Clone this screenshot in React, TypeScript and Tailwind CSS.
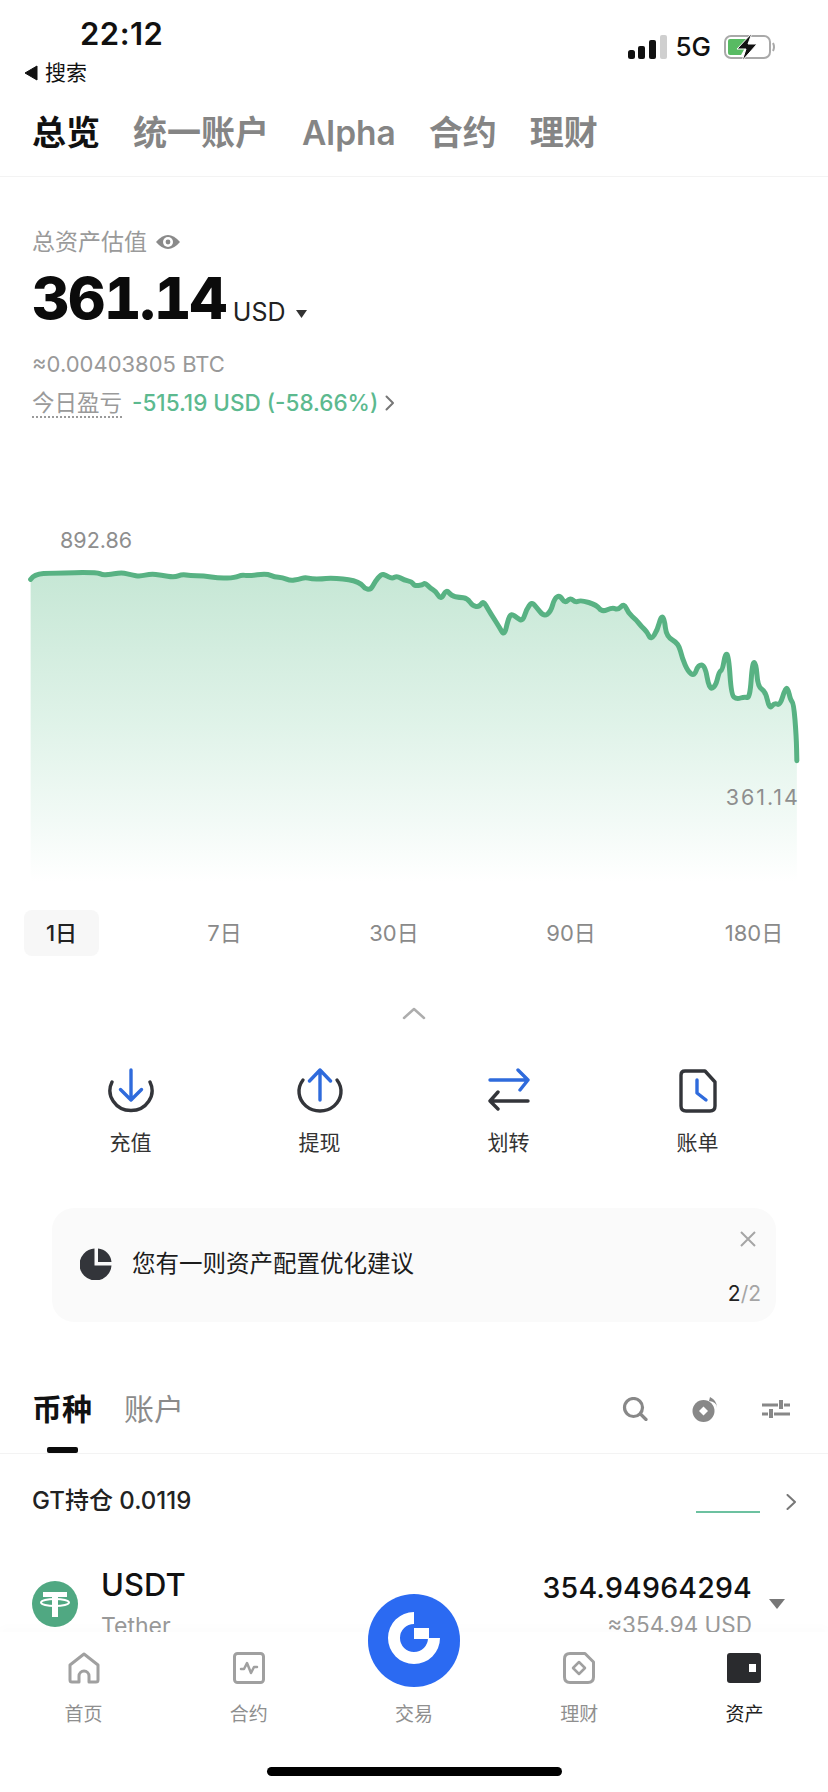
import React from "react";

const pts: [number, number][] = [[58,208],[65,192],[100,189],[183,187],[195,195],[205,193],[215,192],[232,188],[250,195],[265,199],[285,192],[305,195],[330,202],[345,193],[360,197],[385,197],[415,205],[445,203],[458,194],[470,198],[505,191],[520,201],[535,203],[550,212],[565,208],[578,202],[590,207],[610,207],[625,204],[650,207],[670,212],[685,222],[690,235],[702,240],[710,215],[722,192],[730,195],[742,206],[752,198],[765,210],[780,215],[785,228],[800,225],[805,218],[815,235],[825,243],[835,270],[845,238],[855,258],[870,262],[885,265],[895,288],[908,291],[915,272],[925,300],[935,325],[945,350],[955,378],[962,330],[968,310],[980,325],[990,333],[997,298],[1007,276],[1015,290],[1030,320],[1043,305],[1050,265],[1060,256],[1070,280],[1080,263],[1090,278],[1100,270],[1130,285],[1140,306],[1160,292],[1170,300],[1182,280],[1190,310],[1205,330],[1215,350],[1225,365],[1233,390],[1245,360],[1252,318],[1258,325],[1262,380],[1285,400],[1292,445],[1303,485],[1315,498],[1322,465],[1335,465],[1343,538],[1355,530],[1362,485],[1368,480],[1374,428],[1380,440],[1385,555],[1395,568],[1410,560],[1420,565],[1425,455],[1432,460],[1435,530],[1450,545],[1457,598],[1467,578],[1477,587],[1487,535],[1492,535],[1497,570],[1503,580],[1508,680],[1509,752]];
let line = `M${pts[0][0]} ${pts[0][1]}`;
for (let i = 1; i < pts.length - 1; i++) {
  const mx = (pts[i][0] + pts[i + 1][0]) / 2;
  const my = (pts[i][1] + pts[i + 1][1]) / 2;
  line += `Q${pts[i][0]} ${pts[i][1]} ${mx} ${my}`;
}
line += `L${pts[pts.length - 1][0]} ${pts[pts.length - 1][1]}`;
const area = line + "L1509 1115L58 1115Z";

function Chart() {
  return (
    <div className="relative h-[400px]">
      <svg viewBox="0 0 1568 1200" preserveAspectRatio="none" className="block w-[828px] h-[400px]">
        <defs>
          <linearGradient id="fillG" gradientUnits="userSpaceOnUse" x1="0" y1="187" x2="0" y2="1115">
            <stop offset="0" stopColor="#c6e7d5" />
            <stop offset="0.5" stopColor="#e0f3e9" />
            <stop offset="0.8" stopColor="#f2faf6" />
            <stop offset="1" stopColor="#ffffff" />
          </linearGradient>
        </defs>
        <path d={area} fill="url(#fillG)" />
        <path d={line} fill="none" stroke="#58b283" strokeWidth="5" vectorEffect="non-scaling-stroke" strokeLinejoin="round" strokeLinecap="round" />
      </svg>
      <span className="absolute left-[60px] top-[17px] text-[21.5px] leading-[26px] text-[#8e8e8e]">892.86</span>
      <span className="absolute right-[28px] top-[274px] text-[21.5px] leading-[26px] tracking-[2px] text-[#8e8e8e]">361.14</span>
    </div>
  );
}

function Deposit() {
  return (
    <svg width="48" height="46" viewBox="0 0 48 46" fill="none" strokeLinecap="round" strokeLinejoin="round" strokeWidth="3.4">
      <path d="M5 14A21 20 0 1 0 43 14" stroke="#33353a" />
      <path d="M24 2V32M13.5 21.5L24 32L34.5 21.5" stroke="#2f6bdc" />
    </svg>
  );
}
function Withdraw() {
  return (
    <svg width="48" height="46" viewBox="0 0 48 46" fill="none" strokeLinecap="round" strokeLinejoin="round" strokeWidth="3.4">
      <path d="M7 12A21 19.500 0 1 0 41 12" stroke="#33353a" />
      <path d="M24 32V2M13.5 13L24 2L34.5 13" stroke="#2f6bdc" />
    </svg>
  );
}
function Transfer() {
  return (
    <svg width="48" height="46" viewBox="0 0 48 46" fill="none" strokeLinecap="round" strokeLinejoin="round" strokeWidth="3.4">
      <path d="M5 12H43M33 2L43 12L35 22" stroke="#2f6bdc" />
      <path d="M43 33H5M13 24L5 33L13 41" stroke="#33353a" />
    </svg>
  );
}
function Bill() {
  return (
    <svg width="48" height="46" viewBox="0 0 48 46" fill="none" strokeLinecap="round" strokeLinejoin="round" strokeWidth="3.4">
      <path d="M11 3H31L41 14V38Q41 43 36 43H12Q7 43 7 38V7Q7 3 11 3Z" stroke="#33353a" />
      <path d="M23 12V25L32 32" stroke="#2f6bdc" />
    </svg>
  );
}

function Action({ icon, label }: { icon: React.ReactNode; label: string }) {
  return (
    <div className="flex flex-col items-center">
      <div className="h-[46px] flex items-center justify-center">{icon}</div>
      <span className="mt-[16px] text-[21px] leading-[26px] text-[#333]">{label}</span>
    </div>
  );
}

function NavItem({ icon, label, active }: { icon?: React.ReactNode; label: string; active?: boolean }) {
  return (
    <div className="flex flex-col items-center">
      <div className="h-[32px] flex items-center justify-center">{icon}</div>
      <span className={`mt-[19px] text-[19px] leading-[24px] ${active ? "text-[#222]" : "text-[#8f8f8f]"}`}>{label}</span>
    </div>
  );
}

export default function App() {
  return (
    <div
      className="relative w-[828px] h-[1792px] overflow-hidden bg-white text-[#111]"
      style={{ fontFamily: 'Inter, "Noto Sans CJK SC", sans-serif' }}
    >
      {/* status bar */}
      <div className="flex justify-between h-[100px] pl-[24px] pr-[52px]">
        <div>
          <div className="pl-[56px] pt-[16px] text-[31px] leading-[36px] font-semibold tracking-[0.5px]">22:12</div>
          <div className="flex items-center gap-[7px] mt-[8px] text-[21px] leading-[26px]">
            <svg width="14" height="16" viewBox="0 0 14 16"><path d="M13 1V15L1 8Z" fill="#111" stroke="#111" strokeLinejoin="round" /></svg>
            <span>搜索</span>
          </div>
        </div>
        <div className="flex items-center h-[26px] mt-[34px]">
          <svg width="39" height="24" viewBox="0 0 39 24">
            <rect x="0" y="15" width="7" height="9" rx="2.5" fill="#111" />
            <rect x="10" y="11" width="7" height="13" rx="2" fill="#111" />
            <rect x="21" y="5" width="7" height="19" rx="2" fill="#111" />
            <rect x="32" y="0" width="7" height="24" rx="2" fill="#cfcfcf" />
          </svg>
          <span className="ml-[8px] text-[26px] leading-[26px] font-medium">5G</span>
          <svg className="ml-[13px]" width="52" height="28" viewBox="0 0 52 28">
            <rect x="1" y="3" width="45" height="22" rx="6" fill="none" stroke="#a9a9a9" strokeWidth="2" />
            <path d="M4 8Q4 6 6 6H26L17 22H6Q4 22 4 20Z" fill="#58bb63" />
            <path d="M49 10Q51 14 49 18" stroke="#a9a9a9" strokeWidth="2" fill="none" />
            <path d="M28 0L13 16H22L18 28L33 11H24Z" fill="#111" stroke="#fff" strokeWidth="1" />
          </svg>
        </div>
      </div>

      {/* top tabs */}
      <div className="flex items-center gap-[33px] h-[77px] pl-[32px] pb-[10px] border-b border-[#f3f3f3] text-[34px] leading-[44px] font-semibold text-[#858585]">
        <span className="text-[#111] font-bold">总览</span>
        <span>统一账户</span>
        <span className="text-[33.5px]">Alpha</span>
        <span>合约</span>
        <span>理财</span>
      </div>

      {/* summary */}
      <div className="pl-[32px] pt-[50px]">
        <div className="flex items-center h-[30px] text-[23px] leading-[30px] text-[#9a9a9a]">
          <span>总资产估值</span>
          <svg className="ml-[8px]" width="26" height="20" viewBox="0 0 26 20">
            <path d="M1 10Q13 -4 25 10Q13 24 1 10Z" fill="#8a8a8a" />
            <circle cx="13" cy="10" r="5" fill="#fff" />
            <circle cx="13" cy="10" r="2.4" fill="#8a8a8a" />
          </svg>
        </div>
        <div className="flex items-end h-[66px] mt-[8px]">
          <span className="text-[58px] leading-[66px] font-extrabold tabular-nums tracking-[-1.5px] text-[#0b0b0b]">361.14</span>
          <span className="ml-[7px] mb-[4px] text-[25px] leading-[30px] text-[#222]">USD</span>
          <svg className="ml-[11px] mb-[13px]" width="11" height="8" viewBox="0 0 11 8"><path d="M0 0H11L5.5 8Z" fill="#333" /></svg>
        </div>
        <div className="mt-[19px] text-[22px] leading-[28px] text-[#999]">≈0.00403805 BTC</div>
        <div className="flex items-center mt-[9px] h-[32px]">
          <span className="text-[22.5px] leading-[27px] text-[#9a9a9a] border-b-2 border-dotted border-[#9a9a9a]">今日盈亏</span>
          <span className="ml-[10px] text-[22.5px] leading-[28px] font-medium text-[#5cb98f]">-515.19 USD (-58.66%)</span>
          <svg className="ml-[7px]" width="10" height="16" viewBox="0 0 10 16" fill="none"><path d="M1.5 1.5L8 8L1.5 14.500" stroke="#777" strokeWidth="2" strokeLinecap="round" strokeLinejoin="round" /></svg>
        </div>
      </div>

      {/* chart */}
      <div className="mt-[91px]">
        <Chart />
      </div>

      {/* ranges */}
      <div className="relative h-[46px] flex items-center pl-[24px] text-[22px] text-[#8a8a8a]">
        <div className="w-[75px] h-[46px] rounded-[8px] bg-[#f7f7f7] flex items-center justify-center text-[#222] font-medium">1日</div>
        <span className="ml-[103px] w-[45px] text-center">7日</span>
        <span className="ml-[117px] w-[60px] text-center">30日</span>
        <span className="ml-[117px] w-[60px] text-center">90日</span>
        <span className="ml-[118px] w-[70px] text-center">180日</span>
      </div>

      <div className="flex justify-center mt-[50px] h-[14px]">
        <svg width="24" height="14" viewBox="0 0 24 14" fill="none"><path d="M2 12L12 3L22 12" stroke="#adadad" strokeWidth="2.500" strokeLinecap="round" strokeLinejoin="round" /></svg>
      </div>

      {/* actions */}
      <div className="grid grid-cols-4 w-[756px] ml-[36px] mt-[48px]">
        <Action icon={<Deposit />} label="充值" />
        <Action icon={<Withdraw />} label="提现" />
        <Action icon={<Transfer />} label="划转" />
        <Action icon={<Bill />} label="账单" />
      </div>

      {/* card */}
      <div className="relative mx-[52px] mt-[52px] h-[114px] rounded-[22px] bg-[#fafafa] flex items-center pl-[28px] pb-[2px]">
        <svg width="32" height="32" viewBox="0 0 32 32">
          <path d="M14.500 0.500V17.500H31.500A16 16 0 1 1 14.500 0.500Z" fill="#33353a" />
          <path d="M18 0.500A15 15 0 0 1 31.500 14H18Z" fill="#33353a" />
        </svg>
        <span className="ml-[20px] text-[23.5px] leading-[30px] text-[#1c1c1c]">您有一则资产配置优化建议</span>
        <svg className="absolute right-[20px] top-[23px]" width="16" height="16" viewBox="0 0 16 16" fill="none"><path d="M1 1L15 15M15 1L1 15" stroke="#a5a5a5" strokeWidth="2" /></svg>
        <span className="absolute right-[15px] top-[73px] text-[21px] leading-[26px] text-[#222]">2<span className="text-[#a5a5a5]">/2</span></span>
      </div>

      {/* asset tabs */}
      <div className="relative flex items-center h-[71px] mt-[61px] pl-[32px] pr-[38px] pb-[18px] border-b border-[#f3f3f3]">
        <span className="text-[30px] leading-[38px] font-semibold text-[#111]">币种</span>
        <span className="ml-[32px] text-[30px] leading-[38px] text-[#8b8b8b]">账户</span>
        <div className="absolute left-[47px] bottom-[0px] w-[31px] h-[6px] rounded-[2px] bg-[#0b0b0b]" />
        <div className="ml-auto flex items-center gap-[44px]">
          <svg width="26" height="24" viewBox="0 0 26 24" fill="none"><circle cx="11.500" cy="10.500" r="9" stroke="#888" strokeWidth="3.200" /><path d="M18.500 17L24 22.500" stroke="#888" strokeWidth="3.200" strokeLinecap="round" /></svg>
          <svg width="26" height="26" viewBox="0 0 26 26">
            <path d="M18 1A12 12 0 0 1 25 12Q25 6 17 5Z" fill="#888" />
            <circle cx="11.500" cy="15" r="11" fill="#888" />
            <path d="M11.500 10.500L16 15L11.500 19.500L7 15Z" fill="#fff" />
          </svg>
          <svg width="28" height="20" viewBox="0 0 28 20" fill="none" stroke="#888" strokeWidth="3.200">
            <path d="M0 6H16M22 6H28M0 15H6M12 15H28" />
            <path d="M19 1V10M9 10V19" strokeWidth="4" />
          </svg>
        </div>
      </div>

      {/* GT row */}
      <div className="flex items-center h-[70px] mt-[13px] pl-[32px] pr-[31px] text-[24px] font-medium text-[#222]">
        <span className="-mt-[3px]">GT持仓 0.0119</span>
        <div className="ml-auto w-[64px] h-[2px] mt-[20px] bg-[#6cc1a0]" />
        <svg className="ml-[26px] -mt-[1px]" width="11" height="16" viewBox="0 0 11 16" fill="none"><path d="M1.500 1L9 8L1.500 15" stroke="#777" strokeWidth="2" strokeLinecap="round" strokeLinejoin="round" /></svg>
      </div>

      {/* USDT row */}
      <div className="flex items-start pl-[32px] pr-[43px] mt-[31px]">
        <svg className="mt-[13px]" width="46" height="46" viewBox="0 0 46 46">
          <circle cx="23" cy="23" r="23" fill="#50a882" />
          <path d="M11 11H35V16H26V36H20V16H11Z" fill="#fff" />
          <ellipse cx="23" cy="21.500" rx="14" ry="3.600" fill="none" stroke="#fff" strokeWidth="2" />
        </svg>
        <div className="ml-[23px]">
          <div className="text-[31px] leading-[38px] font-medium text-[#111] -mt-[2px]">USDT</div>
          <div className="text-[23px] leading-[28px] mt-[8px] text-[#999]">Tether</div>
        </div>
        <div className="ml-auto mt-[2px] text-right">
          <div className="text-[28.5px] leading-[36px] font-medium text-[#111] tracking-[0.2px]">354.94964294</div>
          <div className="text-[22.5px] leading-[28px] mt-[5px] text-[#999]">≈354.94 USD</div>
        </div>
        <svg className="ml-[17px] mt-[31px]" width="16" height="10" viewBox="0 0 16 10"><path d="M0 0H16L8 10Z" fill="#777" /></svg>
      </div>

      {/* bottom navigation */}
      <div className="absolute left-0 right-0 bottom-0 h-[160px] bg-white shadow-[0_-6px_8px_rgba(0,0,0,0.012)]">
        <div className="grid grid-cols-5 w-[828px] px-[1px] mt-[20px]">
          <NavItem
            label="首页"
            icon={<svg width="32" height="32" viewBox="0 0 32 32" fill="none" stroke="#a0a0a0" strokeWidth="3" strokeLinejoin="round" strokeLinecap="round"><path d="M11 30H4Q2 30 2 28V13L16 2L30 13V28Q30 30 28 30H21V24A5 5 0 0 0 11 24Z" /></svg>}
          />
          <NavItem
            label="合约"
            icon={<svg width="32" height="32" viewBox="0 0 32 32" fill="none" stroke="#a0a0a0" strokeWidth="3" strokeLinejoin="round" strokeLinecap="round"><rect x="1.500" y="1.500" width="29" height="29" rx="3" /><path d="M8 17H11L14 11L18 21L21 15H24" strokeWidth="2.500" /></svg>}
          />
          <NavItem label="交易" />
          <NavItem
            label="理财"
            icon={<svg width="32" height="32" viewBox="0 0 32 32" fill="none" stroke="#a0a0a0" strokeWidth="3" strokeLinejoin="round"><path d="M7 1.500H22L30.500 10V25Q30.500 30.500 25 30.500H7Q1.500 30.500 1.500 25V7Q1.500 1.500 7 1.500Z" /><path d="M16 10L22 16L16 22L10 16Z" strokeWidth="2.500" /></svg>}
          />
          <NavItem
            active
            label="资产"
            icon={<svg width="34" height="30" viewBox="0 0 34 30"><rect width="34" height="30" rx="3" fill="#2a2b2e" /><rect x="22" y="11" width="7" height="8" fill="#fff" /></svg>}
          />
        </div>
        <div className="absolute left-[267px] bottom-[16px] w-[295px] h-[9px] rounded-full bg-black" />
      </div>

      {/* trade button */}
      <div className="absolute left-[368px] top-[1594px] w-[92px] h-[93px] rounded-full bg-[#2b6af2] flex items-center justify-center">
        <svg width="92" height="93" viewBox="0 0 92 93">
          <path d="M46 18A26 26 0 1 0 72 44H60A14 14 0 1 1 46 30Z" fill="#fff" />
          <rect x="46" y="34" width="15" height="11" fill="#fff" />
        </svg>
      </div>
    </div>
  );
}
